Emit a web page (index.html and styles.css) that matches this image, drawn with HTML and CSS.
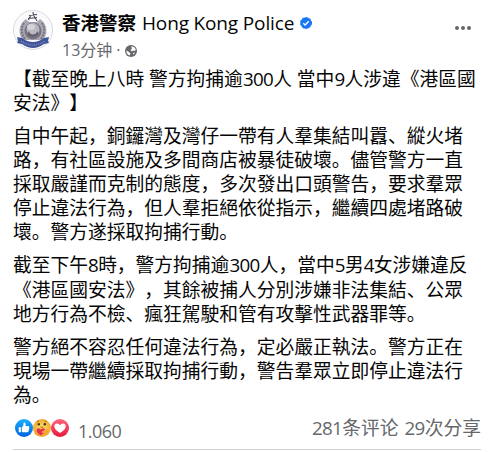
FILE: index.html
```html
<!DOCTYPE html>
<html lang="zh-CN">
<head>
  <meta charset="UTF-8">
  <meta name="viewport" content="width=device-width,initial-scale=1">
  <title>香港警察 Hong Kong Police</title>
  <link rel="stylesheet" href="styles.css">
</head>
<body>

<article class="post">
  <header class="post-header">
    <svg class="avatar" viewBox="0 0 40 40">
      <circle cx="20" cy="20" r="19.5" fill="#fafafc" stroke="#d9dade"/>
      <path d="M13 9C5 14 5 25 10 30h20c5-5 5-16-3-21l-3 3h-8z" fill="#aaa7b2"/>
      <path d="M11 13c-3 4-3 11 1 16M29 13c3 4 3 11-1 16" fill="none" stroke="#77727f" stroke-width="2" stroke-dasharray="2 1"/>
      <circle cx="20" cy="21" r="8.5" fill="#77727f"/>
      <circle cx="20" cy="19.5" r="6.5" fill="#b9b7c0"/>
      <path d="M15 21q5 7 10 0v4q-5 4-10 0z" fill="#65606e"/>
      <ellipse cx="18" cy="17" rx="4" ry="3" fill="#d5d4da"/>
      <path d="M16 5.5l8-1M20 2l.5 4M17.5 6l-2 4M21 6l3 5M15 8.5l9-1" fill="none" stroke="#4a4754" stroke-width="1.1"/>
      <path d="M4 27l5 1q11 8 22 0l5-1-1 4 1 2-5 1q-11 8-22 0l-5-1 1-2z" fill="#40569a"/>
      <path d="M8 31q12 8 24 0" fill="none" stroke="#8795c4" stroke-width="1.2" stroke-dasharray="1 1"/>
    </svg>
    <div class="post-info">
      <div class="name">
        <b>香港警察</b><span class="name-en">Hong Kong Police</span>
        <svg class="verified" viewBox="0 0 12 12">
          <circle cx="6" cy="6" r="5.5" fill="#1877f2" stroke="#1877f2" stroke-dasharray="2.5 1"/>
          <path d="M3.3 6.2l1.9 1.8 3.5-3.7" fill="none" stroke="#fff" stroke-width="1.4"/>
        </svg>
      </div>
      <div class="meta">
        <span>13分钟</span><span class="dot">·</span>
        <svg class="globe" viewBox="0 0 12 12">
          <circle cx="6" cy="6" r="6" fill="#65676b"/>
          <path d="M6 1.2L9 2l1.8 2.2L10 6 8.200 5.500 7 6.500 5.500 5 7 3.500zM1.200 5.500L4 7l1.500 1.500-1 2Q1.500 9.500 1.200 5.500zM8 8l2-.5-1.500 2.300z" fill="#fff"/>
        </svg>
      </div>
    </div>
    <svg class="more" viewBox="0 0 16 4">
      <circle cx="2" cy="2" r="2"/>
      <circle cx="8" cy="2" r="2"/>
      <circle cx="14" cy="2" r="2"/>
    </svg>
  </header>

  <div class="post-body">
    <p>【截至晚上八時 警方拘捕逾<span class="num">300</span>人 當中<span class="num">9</span>人涉違《港區國<br>安法》】</p>
    <p>自中午起，銅鑼灣及灣仔一帶有人羣集結叫囂、縱火堵<br>路，有社區設施及多間商店被暴徒破壞。儘管警方一直<br>採取嚴謹而克制的態度，多次發出口頭警告，要求羣眾<br>停止違法行為，但人羣拒絕依從指示，繼續四處堵路破<br>壞。警方遂採取拘捕行動。</p>
    <p>截至下午<span class="num">8</span>時，警方拘捕逾<span class="num">300</span>人，當中<span class="num">5</span>男<span class="num">4</span>女涉嫌違反<br>《港區國安法》，其餘被捕人分別涉嫌非法集結、公眾<br>地方行為不檢、瘋狂駕駛和管有攻擊性武器罪等。</p>
    <p>警方絕不容忍任何違法行為，定必嚴正執法。警方正在<br>現場一帶繼續採取拘捕行動，警告羣眾立即停止違法行<br>為。</p>
  </div>

  <footer class="post-footer">
    <div class="reactions">
      <svg class="reaction" viewBox="0 0 18 18">
        <defs>
          <linearGradient id="like" x2="0" y2="1"><stop stop-color="#18afff"/><stop offset="1" stop-color="#0062df"/></linearGradient>
          <linearGradient id="love" x2="0" y2="1"><stop stop-color="#ff6680"/><stop offset="1" stop-color="#e61739"/></linearGradient>
          <radialGradient id="care"><stop stop-color="#ffe36a"/><stop offset="1" stop-color="#f2a92c"/></radialGradient>
        </defs>
        <circle cx="9" cy="9" r="9" fill="url(#like)"/>
        <path d="M3.7 8.2h2.2v5H3.7zM6.8 8.2q2-1.5 1.8-4 0-1 1-.8 1.5.4.9 3.7h2.7q1.3.2.9 1.3.6.8-.1 1.7.3.9-.4 1.5 0 1.5-1.3 1.6H9q-1.4 0-2.2-.5z" fill="#fff"/>
      </svg>
      <svg class="reaction" viewBox="0 0 18 18">
        <circle cx="9" cy="9" r="9" fill="url(#care)"/>
        <circle cx="5.8" cy="5.2" r="1.2" fill="#43312b"/>
        <circle cx="11.8" cy="5.2" r="1.2" fill="#43312b"/>
        <path d="M3.8 2.8l2-1M11.5 1.8l2 1M7.3 7.8q1.5 1.5 3 0" fill="none" stroke="#8a4b18" stroke-width=".8"/>
        <path d="M8 16.5Q3 14 3.7 10.7q1.6-2.6 4-.2 2.8-2.6 4.6.2.8 3.5-4.3 5.8z" fill="#e92c50"/>
        <path d="M2 10q-2 5 2 6.5 2.500 1 2-.8L3.500 13zM15 10.500q-5 .2-6.500 2.500 0 1.300 3 .8l-2.800 1.800q1 1.800 4 .1 4-2.200 2.300-5.200z" fill="#f3a535"/>
      </svg>
      <svg class="reaction" viewBox="0 0 18 18">
        <circle cx="9" cy="9" r="9" fill="url(#love)"/>
        <path d="M9 14Q3.3 10.7 3.3 7.5q0-2.8 2.7-3 2 0 3 1.8 1-1.8 3-1.8 2.7.2 2.7 3Q14.7 10.7 9 14z" fill="#fff"/>
      </svg>
      <span class="count">1.060</span>
    </div>
    <div class="stats">
      <span><span class="num">281</span>条评论</span>
      <span><span class="num">29</span>次分享</span>
    </div>
  </footer>
</article>

</body>
</html>
```
FILE: styles.css
```css
body {
  margin: 0;
  background: #fff;
  color: #050505;
  font-family: "Open Sans", "Noto Sans CJK SC", sans-serif;
  font-size: 18.75px;
  text-spacing-trim: space-all;
}

.post {
  width: 468px;
  padding: 10px 0 0 13px;
  white-space: nowrap;
}

.post-header {
  display: flex;
  gap: 9px;
  height: 57px;
}

.avatar {
  width: 40px;
  height: 40px;
}

.name {
  display: flex;
  align-items: center;
  height: 26px;
  font-size: 18.5px;
  line-height: 26px;
}

.name-en {
  margin-left: 6px;
  font-size: 19px;
  letter-spacing: -0.15px;
}

.verified {
  width: 12px;
  height: 12px;
  margin-left: 6px;
}

.meta {
  display: flex;
  align-items: center;
  height: 28px;
  color: #65676b;
  font-size: 16px;
  line-height: 28px;
}

.dot {
  margin: 0 4px;
}

.globe {
  width: 12px;
  height: 12px;
  margin-top: 2px;
}

.more {
  width: 16px;
  height: 4px;
  margin: 16px 10px 0 auto;
  fill: #65676b;
}

.post-body {
  line-height: 24.1px;
}

.post-body p {
  margin: 0 0 8.9px;
}

.num {
  letter-spacing: -0.6px;
}

.post-footer {
  display: flex;
  justify-content: space-between;
  height: 33px;
  border-bottom: 1px solid #ced0d4;
  color: #65676b;
  line-height: 24px;
}

.reactions {
  display: flex;
  padding-left: 2px;
}

.reaction {
  width: 18px;
  height: 18px;
  margin-top: 3px;
}

.count {
  margin: 3px 0 0 9px;
  font-size: 18px;
  letter-spacing: -0.5px;
}

.stats {
  display: flex;
  gap: 6px;
}
```
